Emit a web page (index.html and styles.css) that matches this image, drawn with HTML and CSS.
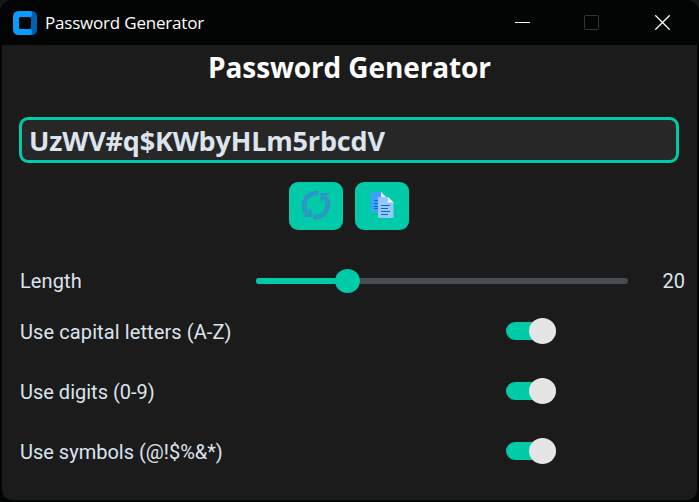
FILE: index.html
```html
<!DOCTYPE html>
<html lang="en">
<head>
<meta charset="utf-8">
<title>Password Generator</title>
<link rel="stylesheet" href="styles.css">
</head>
<body>
<div class="window">
  <header class="titlebar">
    <svg class="logo" width="24" height="24" viewBox="0 0 24 24">
      <path fill="#0260b0" d="M14 0h4q6 0 6 6v12q0 6-6 6h-4z"/>
      <path fill="#0a9bff" d="M6 0h11q2 0 2 3t-2 3v1H6v10h11v1q2 0 2 3t-2 3H6q-6 0-6-6V6q0-6 6-6z"/>
      <rect x="6" y="6" width="12" height="12" rx="2" fill="#020605"/>
    </svg>
    <span class="caption">Password Generator</span>
    <div class="controls">
      <svg width="15" height="15" viewBox="0 0 15 15"><path d="M0 7.500h15" stroke="#fff"/></svg>
      <svg width="15" height="15" viewBox="0 0 15 15"><rect x=".5" y=".5" width="14" height="14" rx="1" fill="none" stroke="#343635"/></svg>
      <svg width="15" height="15" viewBox="0 0 15 15"><path d="M.3.300l14.400 14.400M14.700.300L.3 14.700" stroke="#fff" stroke-width="1.300"/></svg>
    </div>
  </header>
  <main class="content">
    <h1 class="heading">Password Generator</h1>
    <div class="password">UzWV#q$KWbyHLm5rbcdV</div>
    <div class="actions">
      <button class="action" aria-label="Generate">
        <svg width="28" height="28" viewBox="0 0 28 28" fill="#259bd2" stroke="#4a7fbd" stroke-width=".9" stroke-linejoin="round">
          <path d="M15.800.500v3.200C9 3.200 3.800 8 3.800 14.300c0 2.700 1 5 2.700 6.800L9 18.600v7H1.600l2.500-2.300C1.800 21 .500 17.800.500 14.300.500 6.300 7.200 0 15.800.500z"/>
          <path d="M12.200 27.500v-3.200C19 24.800 24.200 20 24.200 13.700c0-2.700-1-5-2.700-6.800L19 9.600V2.700h7.400l-2.500 2.200C26.200 7.200 27.500 10.300 27.500 13.700c0 8-6.700 14.300-15.300 13.800z"/>
        </svg>
      </button>
      <button class="action" aria-label="Copy">
        <svg width="23" height="26" viewBox="0 0 23 26">
          <path fill="#3f9fff" d="M0 0h10l5 5v15H0z"/>
          <path fill="#eaf4ff" d="M10 0l5 5h-5z"/>
          <path stroke="#1766b5" d="M3 8.500h4M3 11.500h4M3 14.500h4M3 16.500h4"/>
          <path fill="#91c9ff" d="M7 5h10l5.500 5.500V26H7z"/>
          <path fill="#f1f8ff" d="M17 5l5.500 5.500H17z"/>
          <path stroke="#1766b5" d="M10 13.500h9M10 16.500h7M10 19.500h9M10 22.500h7"/>
        </svg>
      </button>
    </div>
    <div class="row length">
      <span class="label wide">Length</span>
      <div class="slider"><div class="fill"></div><div class="thumb"></div></div>
      <span class="value">20</span>
    </div>
    <div class="row option"><span class="label wide">Use capital letters (A-Z)</span><div class="switch"><div class="knob"></div></div></div>
    <div class="row option"><span class="label">Use digits (0-9)</span><div class="switch"><div class="knob"></div></div></div>
    <div class="row option"><span class="label">Use symbols (@!$%&amp;*)</span><div class="switch"><div class="knob"></div></div></div>
  </main>
</div>
</body>
</html>
```
FILE: styles.css
```css
* { box-sizing: border-box; }
body { margin: 0; background: #171717; }
.window {
  width: 699px;
  height: 502px;
  padding: 0 2px 2px;
  background: #020504;
  border-radius: 12px 12px 0 0;
  overflow: hidden;
}
.titlebar {
  height: 45px;
  display: flex;
  align-items: center;
  padding: 0 27px 0 11px;
}
.caption {
  margin-left: 8px;
  font: 17px/24px "Open Sans", sans-serif;
  letter-spacing: -0.2px;
  color: #fff;
  white-space: nowrap;
}
.controls { margin-left: auto; display: flex; gap: 54px; }
.controls svg:last-child { margin-left: 2px; }
.controls svg, .logo, .action svg { display: block; }
.content {
  height: 455px;
  background: #1b1b1b;
  border-radius: 0 0 10px 10px;
}
.heading {
  height: 45px;
  margin: 0 0 27px;
  text-align: center;
  font: bold 28px/45px "Open Sans", sans-serif;
  letter-spacing: -0.12px;
  color: #fff;
  white-space: nowrap;
}
.password {
  height: 46px;
  margin: 0 18px 0 17px;
  padding-left: 7px;
  border: 3px solid #00caa8;
  border-radius: 9px;
  background: #272727;
  font: bold 27px/41px "Open Sans", sans-serif;
  letter-spacing: -0.18px;
  color: #dce4ee;
  white-space: nowrap;
}
.actions {
  display: flex;
  justify-content: center;
  gap: 12px;
  height: 48px;
  margin: 19px 1px 21px 0;
}
.action {
  width: 54px;
  height: 48px;
  padding: 0 0 2px;
  border: 0;
  border-radius: 9px;
  background: #00caa8;
  display: flex;
  align-items: center;
  justify-content: center;
}
.row {
  height: 60px;
  padding: 0 12px 0 18px;
  display: flex;
  align-items: center;
  font: 20px/24px Roboto, sans-serif;
  color: #dce4ee;
}
.row.length { margin-bottom: -10px; }
.label { flex: 0 0 236px; white-space: nowrap; }
.option .label { padding-top: 2px; }
.wide { letter-spacing: 0.1px; }
.value { margin-left: auto; }
.slider {
  position: relative;
  width: 372px;
  height: 6px;
  border-radius: 3px;
  background: #4a4d50;
}
.fill { width: 91px; height: 6px; border-radius: 3px; background: #00caa8; }
.thumb {
  position: absolute;
  left: 78.5px;
  top: -9px;
  width: 25px;
  height: 24px;
  border-radius: 50%;
  background: #00caa8;
}
.switch {
  width: 50px;
  height: 18px;
  margin-left: 250px;
  border-radius: 9px;
  background: #00caa8;
}
.knob {
  width: 27px;
  height: 26px;
  margin-left: 23px;
  transform: translateY(-4px);
  border-radius: 50%;
  background: #e5e5e5;
}
```
